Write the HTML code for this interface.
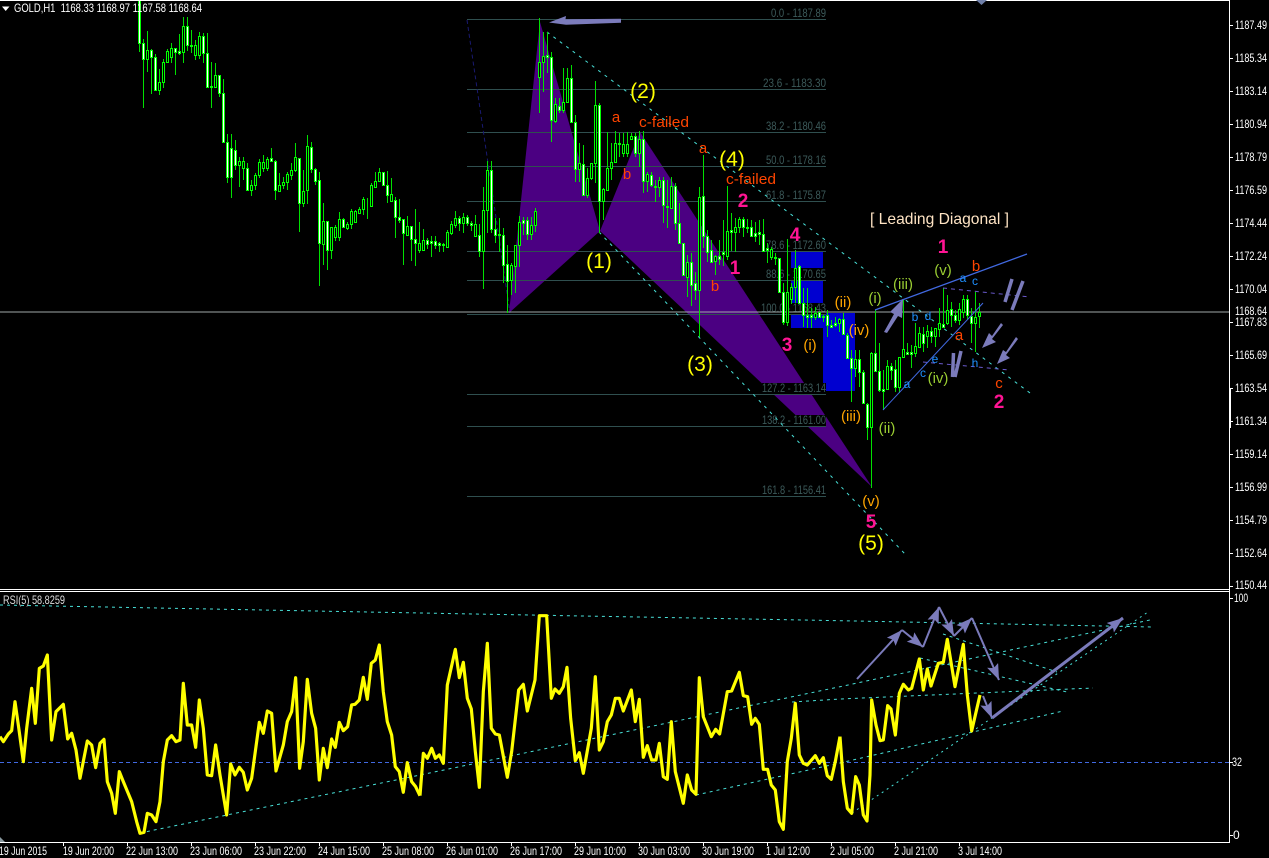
<!DOCTYPE html>
<html><head><meta charset="utf-8"><title>GOLD,H1</title>
<style>
html,body{margin:0;padding:0;background:#000;width:1269px;height:858px;overflow:hidden}
svg{display:block}
text{font-family:"Liberation Sans",sans-serif}
.p text{font-size:12px;fill:#fff}
.f text{font-size:12px;fill:#3c5a5a}
.t text{font-size:12px;fill:#fff}
.m{fill:#ff1493;font-size:19px;text-anchor:middle;font-weight:bold}
.y{fill:#ff0;font-size:21px;text-anchor:middle}
.r{fill:#ff4500;font-size:15px;text-anchor:middle}
.o{fill:#ffa500;font-size:15px;text-anchor:middle}
.g{fill:#9acd32;font-size:15px;text-anchor:middle}
.b{fill:#1e90ff;font-size:12px;text-anchor:middle}
</style></head><body>
<svg width="1269" height="858" viewBox="0 0 1269 858" xmlns="http://www.w3.org/2000/svg">
<defs>
<marker id="ah" markerUnits="userSpaceOnUse" markerWidth="18" markerHeight="14" refX="16" refY="6" orient="auto"><path d="M0 0L16 6L0 12L3 6z" fill="#7b7bbb"/></marker>
</defs>
<rect width="1269" height="858" fill="#000"/>
<!-- harmonic pattern -->
<path d="M509 313L540 22L600 231z" fill="#4b0082"/>
<path d="M600 231L640 132L872 487z" fill="#4b0082"/>
<!-- blue rects -->
<rect x="791" y="251" width="32" height="77" fill="#0000d0"/>
<rect x="823" y="313" width="32" height="78" fill="#0000d0"/>
<!-- fib lines -->
<g stroke="#2f4f4f" stroke-width="1" shape-rendering="crispEdges">
<path d="M467 19.5H826M467 89.5H826M467 132.5H826M467 166.5H826M467 201.5H826M467 251.5H826M467 280.5H826M467 314.5H826M467 394.5H826M467 426.5H826M467 496.5H826" fill="none"/>
</g>
<!-- fib label backgrounds -->
<g fill="#000">
<rect x="771" y="8" width="55" height="11"/><rect x="763" y="78" width="63" height="11"/><rect x="766" y="121" width="60" height="11"/><rect x="766" y="155" width="60" height="11"/><rect x="766" y="190" width="60" height="11"/><rect x="766" y="240" width="60" height="11"/><rect x="766" y="268" width="60" height="12"/><rect x="761" y="303" width="65" height="11"/><rect x="762" y="383" width="64" height="11"/><rect x="762" y="415" width="64" height="11"/><rect x="762" y="485" width="64" height="11"/>
</g>
<g class="f">
<text x="771" y="17" textLength="55" lengthAdjust="spacingAndGlyphs">0.0 - 1187.89</text>
<text x="763" y="87" textLength="63" lengthAdjust="spacingAndGlyphs">23.6 - 1183.30</text>
<text x="766" y="130" textLength="60" lengthAdjust="spacingAndGlyphs">38.2 - 1180.46</text>
<text x="766" y="164" textLength="60" lengthAdjust="spacingAndGlyphs">50.0 - 1178.16</text>
<text x="766" y="199" textLength="60" lengthAdjust="spacingAndGlyphs">61.8 - 1175.87</text>
<text x="766" y="249" textLength="60" lengthAdjust="spacingAndGlyphs">78.6 - 1172.60</text>
<text x="766" y="278" textLength="60" lengthAdjust="spacingAndGlyphs">88.6 - 1170.65</text>
<text x="761" y="312" textLength="65" lengthAdjust="spacingAndGlyphs">100.0 - 1168.43</text>
<text x="762" y="392" textLength="64" lengthAdjust="spacingAndGlyphs">127.2 - 1163.14</text>
<text x="762" y="424" textLength="64" lengthAdjust="spacingAndGlyphs">138.2 - 1161.00</text>
<text x="762" y="494" textLength="64" lengthAdjust="spacingAndGlyphs">161.8 - 1156.41</text>
</g>
<!-- dashed channels -->
<path d="M467 20L510 313" stroke="#191970" stroke-width="1" stroke-dasharray="4 3" fill="none"/>
<path d="M547 32L1030 393M599 232L905 554" stroke="#48e0d8" stroke-width="1" stroke-dasharray="3 5" fill="none"/>
<!-- current price line -->
<path d="M0 312H1229" stroke="#a0a8a8" stroke-width="1" shape-rendering="crispEdges"/>
<!-- wicks -->
<path shape-rendering="crispEdges" stroke="#00e000" stroke-width="1" fill="none" d="M139.5 0V52M143.5 39V108M147.5 31V72M151.5 49V94M155.5 54V91M159.5 69V95M163.5 59V88M167.5 49V63M171.5 43V63M175.5 48V75M179.5 34V55M183.5 17V63M187.5 17V51M191.5 30V53M195.5 40V60M199.5 32V59M203.5 33V63M207.5 33V87M211.5 62V108M215.5 63V87M219.5 75V97M223.5 79V142M227.5 134V183M231.5 134V198M235.5 140V170M239.5 157V187M243.5 157V180M247.5 163V190M251.5 180V196M255.5 173V190M259.5 159V178M263.5 155V172M267.5 157V171M271.5 148V162M275.5 160V200M279.5 173V191M283.5 177V189M287.5 172V190M291.5 163V180M295.5 143V172M299.5 158V232M303.5 170V207M307.5 135V204M311.5 142V173M315.5 168V185M319.5 172V286M323.5 203V265M327.5 221V270M331.5 227V259M335.5 225V241M339.5 212V241M343.5 218V228M347.5 222V230M351.5 209V229M355.5 210V223M359.5 207V213M363.5 197V215M367.5 198V219M371.5 183V207M375.5 172V188M379.5 168V182M383.5 172V186M387.5 171V203M391.5 178V201M395.5 197V238M399.5 199V223M403.5 219V265M407.5 216V236M411.5 226V261M415.5 209V266M419.5 222V253M423.5 229V249M427.5 238V249M431.5 236V257M435.5 236V249M439.5 242V252M443.5 243V252M447.5 230V247M451.5 221V235M455.5 211V228M459.5 216V231M463.5 213V233M467.5 215V226M471.5 221V231M475.5 215V236M479.5 224V257M483.5 187V289M487.5 161V233M491.5 161V233M495.5 218V243M499.5 218V252M503.5 228V283M507.5 245V313M511.5 263V295M515.5 245V293M519.5 216V267M523.5 217V235M527.5 217V240M531.5 217V240M535.5 208V232M539.5 18V113M543.5 32V92M547.5 32V73M551.5 52V142M555.5 98V123M559.5 98V113M563.5 68V113M567.5 68V103M571.5 65V122M575.5 115V182M579.5 143V182M583.5 145V195M587.5 168V198M591.5 163V180M595.5 81V183M599.5 103V233M603.5 188V220M607.5 132V190M611.5 143V180M615.5 131V163M619.5 133V157M623.5 133V157M627.5 132V157M631.5 133V140M635.5 133V157M639.5 131V167M643.5 131V193M647.5 172V192M651.5 172V187M655.5 180V202M659.5 177V197M663.5 177V223M667.5 180V228M671.5 177V209M675.5 183V230M679.5 203V244M683.5 243V275M687.5 255V297M691.5 253V306M695.5 272V300M699.5 187V337M703.5 155V248M707.5 230V262M711.5 240V262M715.5 255V275M719.5 240V265M723.5 220V266M727.5 186V260M731.5 213V251M735.5 218V252M739.5 217V233M743.5 217V237M747.5 219V233M751.5 220V237M755.5 222V242M759.5 220V245M763.5 219V252M767.5 243V263M771.5 247V260M775.5 253V265M779.5 258V293M783.5 283V325M787.5 239V326M791.5 283V304M795.5 250V303M799.5 265V303M803.5 288V327M807.5 288V328M811.5 308V328M815.5 307V320M819.5 312V318M823.5 315V322M827.5 310V337M831.5 320V328M835.5 317V327M839.5 318V332M843.5 313V333M847.5 333V358M851.5 350V402M855.5 350V377M859.5 350V387M863.5 370V403M867.5 403V440M871.5 352V488M875.5 310V370M879.5 343V392M883.5 370V410M887.5 360V390M891.5 363V380M895.5 360V392M899.5 357V393M903.5 299V357M907.5 343V355M911.5 345V368M915.5 323V357M919.5 327V348M923.5 327V352M927.5 325V348M931.5 327V343M935.5 328V347M939.5 308V337M943.5 288V328M947.5 295V325M951.5 302V327M955.5 310V323M959.5 303V325M963.5 295V318M967.5 295V320M971.5 308V343M975.5 292V352M979.5 303V328"/>
<!-- bodies white -->
<path shape-rendering="crispEdges" fill="#fff" stroke="#00ff00" stroke-width="1" d="M138.5 .5h2v43h-2zM142.5 43.5h2v16h-2zM150.5 50.5h2v7h-2zM154.5 57.5h2v33h-2zM174.5 48.5h2v4h-2zM178.5 51.5h2v2h-2zM186.5 26.5h2v19h-2zM190.5 45.5h2v1h-2zM202.5 36.5h2v17h-2zM206.5 53.5h2v34h-2zM210.5 86.5h2v1h-2zM218.5 75.5h2v18h-2zM222.5 93.5h2v49h-2zM226.5 142.5h2v35h-2zM230.5 148.5h2v29h-2zM234.5 150.5h2v15h-2zM246.5 168.5h2v22h-2zM270.5 158.5h2v3h-2zM274.5 161.5h2v29h-2zM298.5 158.5h2v45h-2zM310.5 147.5h2v22h-2zM314.5 169.5h2v12h-2zM318.5 180.5h2v63h-2zM326.5 221.5h2v29h-2zM342.5 219.5h2v8h-2zM382.5 172.5h2v13h-2zM386.5 185.5h2v10h-2zM394.5 200.5h2v17h-2zM398.5 217.5h2v3h-2zM402.5 219.5h2v14h-2zM410.5 226.5h2v13h-2zM414.5 239.5h2v4h-2zM426.5 240.5h2v4h-2zM430.5 241.5h2v2h-2zM434.5 241.5h2v4h-2zM438.5 243.5h2v2h-2zM442.5 244.5h2v1h-2zM458.5 218.5h2v5h-2zM466.5 217.5h2v6h-2zM470.5 223.5h2v2h-2zM478.5 235.5h2v16h-2zM490.5 170.5h2v59h-2zM494.5 229.5h2v6h-2zM498.5 234.5h2v1h-2zM502.5 235.5h2v30h-2zM506.5 264.5h2v17h-2zM522.5 220.5h2v3h-2zM526.5 220.5h2v14h-2zM546.5 55.5h2v2h-2zM550.5 57.5h2v63h-2zM558.5 106.5h2v4h-2zM570.5 78.5h2v44h-2zM574.5 122.5h2v47h-2zM582.5 164.5h2v31h-2zM598.5 105.5h2v96h-2zM618.5 143.5h2v1h-2zM634.5 136.5h2v17h-2zM642.5 139.5h2v42h-2zM650.5 175.5h2v10h-2zM654.5 186.5h2v1h-2zM662.5 180.5h2v25h-2zM666.5 206.5h2v1h-2zM674.5 186.5h2v37h-2zM678.5 223.5h2v20h-2zM682.5 243.5h2v32h-2zM690.5 262.5h2v23h-2zM694.5 283.5h2v7h-2zM702.5 196.5h2v40h-2zM706.5 236.5h2v16h-2zM710.5 250.5h2v12h-2zM718.5 256.5h2v3h-2zM722.5 252.5h2v2h-2zM730.5 230.5h2v2h-2zM742.5 219.5h2v8h-2zM746.5 227.5h2v1h-2zM750.5 227.5h2v9h-2zM754.5 233.5h2v3h-2zM758.5 232.5h2v2h-2zM762.5 234.5h2v17h-2zM766.5 248.5h2v2h-2zM774.5 257.5h2v1h-2zM778.5 258.5h2v34h-2zM782.5 292.5h2v30h-2zM798.5 266.5h2v37h-2zM802.5 303.5h2v12h-2zM806.5 315.5h2v2h-2zM810.5 315.5h2v2h-2zM818.5 312.5h2v5h-2zM822.5 316.5h2v1h-2zM826.5 315.5h2v10h-2zM830.5 325.5h2v2h-2zM834.5 323.5h2v2h-2zM842.5 319.5h2v15h-2zM846.5 335.5h2v23h-2zM850.5 358.5h2v10h-2zM858.5 359.5h2v13h-2zM862.5 372.5h2v31h-2zM866.5 404.5h2v23h-2zM874.5 353.5h2v18h-2zM878.5 371.5h2v19h-2zM882.5 389.5h2v2h-2zM890.5 366.5h2v4h-2zM894.5 369.5h2v18h-2zM906.5 352.5h2v2h-2zM910.5 352.5h2v2h-2zM922.5 334.5h2v9h-2zM930.5 331.5h2v5h-2zM942.5 324.5h2v3h-2zM950.5 309.5h2v6h-2zM954.5 315.5h2v5h-2zM966.5 299.5h2v16h-2zM970.5 316.5h2v7h-2z"/>
<!-- bodies black -->
<path shape-rendering="crispEdges" fill="#000" stroke="#00ff00" stroke-width="1" d="M146.5 50.5h2v9h-2zM158.5 82.5h2v8h-2zM162.5 62.5h2v20h-2zM166.5 51.5h2v11h-2zM170.5 48.5h2v9h-2zM182.5 26.5h2v26h-2zM194.5 45.5h2v10h-2zM198.5 36.5h2v19h-2zM214.5 75.5h2v12h-2zM238.5 161.5h2v4h-2zM242.5 161.5h2v7h-2zM250.5 185.5h2v5h-2zM254.5 175.5h2v10h-2zM258.5 162.5h2v13h-2zM262.5 162.5h2v6h-2zM266.5 159.5h2v9h-2zM278.5 185.5h2v6h-2zM282.5 182.5h2v3h-2zM286.5 174.5h2v8h-2zM290.5 170.5h2v5h-2zM294.5 157.5h2v13h-2zM302.5 191.5h2v12h-2zM306.5 146.5h2v44h-2zM322.5 221.5h2v23h-2zM330.5 227.5h2v23h-2zM334.5 227.5h2v10h-2zM338.5 219.5h2v18h-2zM346.5 224.5h2v4h-2zM350.5 211.5h2v13h-2zM354.5 211.5h2v11h-2zM358.5 209.5h2v4h-2zM362.5 199.5h2v10h-2zM370.5 185.5h2v21h-2zM374.5 181.5h2v6h-2zM378.5 172.5h2v9h-2zM390.5 194.5h2v7h-2zM406.5 226.5h2v9h-2zM418.5 243.5h2v7h-2zM422.5 240.5h2v10h-2zM446.5 232.5h2v15h-2zM450.5 224.5h2v9h-2zM454.5 218.5h2v7h-2zM462.5 217.5h2v6h-2zM474.5 224.5h2v12h-2zM482.5 210.5h2v41h-2zM486.5 170.5h2v40h-2zM510.5 265.5h2v15h-2zM514.5 245.5h2v21h-2zM518.5 222.5h2v23h-2zM530.5 225.5h2v9h-2zM534.5 211.5h2v14h-2zM538.5 62.5h2v15h-2zM542.5 56.5h2v6h-2zM554.5 104.5h2v17h-2zM562.5 102.5h2v8h-2zM566.5 78.5h2v24h-2zM578.5 163.5h2v6h-2zM586.5 178.5h2v17h-2zM590.5 163.5h2v15h-2zM594.5 105.5h2v58h-2zM602.5 189.5h2v12h-2zM606.5 168.5h2v22h-2zM610.5 162.5h2v6h-2zM614.5 143.5h2v19h-2zM622.5 144.5h2v9h-2zM626.5 144.5h2v9h-2zM630.5 136.5h2v3h-2zM638.5 139.5h2v14h-2zM646.5 174.5h2v7h-2zM658.5 180.5h2v7h-2zM670.5 186.5h2v22h-2zM686.5 262.5h2v15h-2zM698.5 197.5h2v93h-2zM714.5 256.5h2v5h-2zM726.5 231.5h2v25h-2zM734.5 227.5h2v5h-2zM738.5 219.5h2v8h-2zM770.5 249.5h2v8h-2zM786.5 292.5h2v30h-2zM790.5 287.5h2v12h-2zM794.5 268.5h2v19h-2zM814.5 313.5h2v4h-2zM838.5 319.5h2v4h-2zM854.5 359.5h2v9h-2zM870.5 353.5h2v74h-2zM886.5 366.5h2v23h-2zM898.5 357.5h2v30h-2zM902.5 349.5h2v8h-2zM914.5 346.5h2v7h-2zM918.5 333.5h2v14h-2zM926.5 331.5h2v5h-2zM934.5 328.5h2v8h-2zM938.5 323.5h2v6h-2zM946.5 310.5h2v13h-2zM958.5 309.5h2v11h-2zM962.5 299.5h2v13h-2zM974.5 317.5h2v6h-2zM978.5 312.5h2v4h-2z"/>
<!-- diagonal lines -->
<path d="M875 310L1027 254" stroke="#4169e1" stroke-width="1.3" fill="none"/>
<path d="M883 410L983 303" stroke="#4169e1" stroke-width="1" fill="none"/>
<path d="M943 288L1030 297M923 362L1010 370" stroke="#6a5acd" stroke-width="1" stroke-dasharray="4 4" fill="none"/>
<!-- thick arrows -->
<g fill="#7b7bbb">
<path d="M549 22.5L566 16L565.5 19.3L621 18.7V22.7L566 24.7z"/>
<path d="M884 332L894 314L890 312L903 299L902 318L898 316L887 333z"/>
<path d="M1003 325L992 339L996 342L982 348L989 333L992 336L1001 323z"/>
<path d="M1018 339L1006 355L1010 358L997 364L1003 350L1006 352L1016 337z"/>
</g>
<path d="M1012 279L1005 302M1023 281L1012 310M953.5 353L952.5 377M961 351L955 377" stroke="#7b7bbb" stroke-width="3.5" fill="none"/>
<!-- annotations -->
<text class="y" x="643" y="98">(2)</text>
<text class="y" x="732" y="166">(4)</text>
<text class="y" x="599" y="268">(1)</text>
<text class="y" x="700" y="371">(3)</text>
<text class="y" x="871" y="550">(5)</text>
<text class="r" x="616" y="122">a</text>
<text class="r" x="664" y="127" textLength="50" lengthAdjust="spacingAndGlyphs" style="text-anchor:start" dx="-25">c-failed</text>
<text class="r" x="703" y="153">a</text>
<text class="r" x="627" y="179">b</text>
<text class="r" x="751" y="184" textLength="50" lengthAdjust="spacingAndGlyphs" style="text-anchor:start" dx="-25">c-failed</text>
<text class="r" x="715" y="291">b</text>
<text class="r" x="976" y="271">b</text>
<text class="r" x="959" y="340">a</text>
<text class="r" x="999" y="388">c</text>
<text class="m" x="743" y="207">2</text>
<text class="m" x="735" y="274">1</text>
<text class="m" x="795" y="241">4</text>
<text class="m" x="787" y="351">3</text>
<text class="m" x="871" y="528">5</text>
<text class="m" x="943" y="253">1</text>
<text class="m" x="999" y="408">2</text>
<text class="o" x="843" y="307">(ii)</text>
<text class="o" x="859" y="335">(iv)</text>
<text class="o" x="810" y="350">(i)</text>
<text class="o" x="851" y="421">(iii)</text>
<text class="o" x="871" y="506">(v)</text>
<text class="g" x="875" y="303">(i)</text>
<text class="g" x="903" y="289">(iii)</text>
<text class="g" x="943" y="275">(v)</text>
<text class="g" x="938" y="383">(iv)</text>
<text class="g" x="887" y="433">(ii)</text>
<text class="b" x="963" y="282">a</text>
<text class="b" x="975" y="285">c</text>
<text class="b" x="915" y="321">b</text>
<text class="b" x="928" y="320">d</text>
<text class="b" x="935" y="363">e</text>
<text class="b" x="975" y="367">h</text>
<text class="b" x="923" y="377">c</text>
<text class="b" x="907" y="388">a</text>
<text x="870" y="224" textLength="139" lengthAdjust="spacingAndGlyphs" font-size="16" fill="#ffe4c4">[ Leading Diagonal ]</text>
<!-- header -->
<path d="M2 6.5H9.5L5.7 11z" fill="#fff"/>
<text x="14" y="12" font-size="12" fill="#fff" textLength="188" lengthAdjust="spacingAndGlyphs" xml:space="preserve">GOLD,H1  1168.33 1168.97 1167.58 1168.64</text>
<!-- frame -->
<g stroke="#fff" stroke-width="1" shape-rendering="crispEdges" fill="none">
<path d="M0 .5H1229.5V842.5H0M0 589.5H1229M0 591.5H1229"/>
<path d="M1230 25.5h3M1230 58.5h3M1230 91.5h3M1230 124.5h3M1230 157.5h3M1230 190.5h3M1230 223.5h3M1230 256.5h3M1230 289.5h3M1230 322.5h3M1230 355.5h3M1230 388.5h3M1230 421.5h3M1230 454.5h3M1230 487.5h3M1230 520.5h3M1230 553.5h3M1230 586.5h3M1230 598.5h3M1230 762.5h3M1230 835.5h3"/>
<path d="M63.5 843v3M127.5 843v3M191.5 843v3M255.5 843v3M319.5 843v3M383.5 843v3M447.5 843v3M511.5 843v3M575.5 843v3M639.5 843v3M703.5 843v3M767.5 843v3M831.5 843v3M895.5 843v3M959.5 843v3"/>
<path d="M1230.5 388V428" stroke-width="1"/>
</g>
<path d="M976 0H987L981.5 5z" fill="#6f7fa8"/>
<path d="M0 837L5 842H0z" fill="#8a9aa0"/>
<g class="p">
<text x="1235" y="29" textLength="32" lengthAdjust="spacingAndGlyphs">1187.49</text>
<text x="1235" y="62" textLength="32" lengthAdjust="spacingAndGlyphs">1185.34</text>
<text x="1235" y="95" textLength="32" lengthAdjust="spacingAndGlyphs">1183.14</text>
<text x="1235" y="128" textLength="32" lengthAdjust="spacingAndGlyphs">1180.94</text>
<text x="1235" y="161" textLength="32" lengthAdjust="spacingAndGlyphs">1178.79</text>
<text x="1235" y="194" textLength="32" lengthAdjust="spacingAndGlyphs">1176.59</text>
<text x="1235" y="227" textLength="32" lengthAdjust="spacingAndGlyphs">1174.44</text>
<text x="1235" y="260" textLength="32" lengthAdjust="spacingAndGlyphs">1172.24</text>
<text x="1235" y="293" textLength="32" lengthAdjust="spacingAndGlyphs">1170.04</text>
<text x="1235" y="315" textLength="32" lengthAdjust="spacingAndGlyphs">1168.64</text>
<text x="1235" y="326" textLength="32" lengthAdjust="spacingAndGlyphs">1167.83</text>
<text x="1235" y="359" textLength="32" lengthAdjust="spacingAndGlyphs">1165.69</text>
<text x="1235" y="392" textLength="32" lengthAdjust="spacingAndGlyphs">1163.54</text>
<text x="1235" y="425" textLength="32" lengthAdjust="spacingAndGlyphs">1161.34</text>
<text x="1235" y="458" textLength="32" lengthAdjust="spacingAndGlyphs">1159.14</text>
<text x="1235" y="491" textLength="32" lengthAdjust="spacingAndGlyphs">1156.99</text>
<text x="1235" y="524" textLength="32" lengthAdjust="spacingAndGlyphs">1154.79</text>
<text x="1235" y="557" textLength="32" lengthAdjust="spacingAndGlyphs">1152.64</text>
<text x="1235" y="589" textLength="32" lengthAdjust="spacingAndGlyphs">1150.44</text>
<text x="1234" y="602" textLength="14" lengthAdjust="spacingAndGlyphs">100</text>
<text x="1232" y="766" textLength="10" lengthAdjust="spacingAndGlyphs">32</text>
<text x="1233" y="839">0</text>
</g>
<!-- RSI -->
<text x="3" y="604" font-size="12" fill="#ddd" textLength="62" lengthAdjust="spacingAndGlyphs">RSI(5) 58.8259</text>
<path d="M0 762.5H1229" stroke="#4169e1" stroke-width="1" stroke-dasharray="4 3" shape-rendering="crispEdges"/>
<path d="M0 605L420 613L840 620.7L1153 627M140 833L420 775L840 686.7L1150 620M696 795L840 763L1063 711M792 702L840 699L1093 688M920 658L1067 692M943 634L1057 672" stroke="#48e0d8" stroke-width="1" stroke-dasharray="3 4" fill="none"/>
<path d="M852 813L1148 612" stroke="#48e0d8" stroke-width="1" stroke-dasharray="2 4" fill="none"/>
<g fill="none" stroke="#ffff00" stroke-linejoin="round">
<polyline transform="translate(0,585) scale(.3333)" stroke-width="9.5" points="0,455 10,470 25,447 35,437 45,350 55,420 70,530 80,430 95,310 106,415 118,250 130,243 142,210 155,465 168,380 190,358 203,462 215,445 228,495 240,580 262,468 275,480 287,548 300,475 312,463 322,590 335,625 346,685 358,560 370,590 395,650 410,710 420,745 432,742 442,685 455,690 468,710 480,650 490,530 502,465 515,452 528,470 540,465 550,295 562,420 575,420 587,487 598,345 610,430 622,570 635,572 647,480 660,570 680,690 692,537 705,570 718,547 730,562 742,615 755,580 778,412 790,445 802,378 815,385 828,558 850,480 862,410 875,380 887,278 899,550 910,470 922,283 935,385 947,430 958,585 970,490 982,548 995,462 1006,487 1018,412 1030,437 1043,425 1055,360 1065,358 1078,345 1090,277 1102,343 1114,235 1126,225 1138,180 1150,320 1162,410 1175,450 1186,545 1198,560 1210,622 1222,533 1235,590 1247,605 1260,632"/>
<polyline transform="translate(420,585) scale(.3333)" stroke-width="9.5" points="0,632 10,505 22,520 35,490 46,520 58,510 70,535 82,300 106,193 118,278 130,232 142,340 154,372 166,500 178,607 190,320 202,175 214,430 226,447 238,450 262,577 275,500 296,315 310,298 322,378 345,285 358,92 380,92 394,340 405,312 418,325 430,305 441,247 452,400 466,527 478,503 490,565 514,430 526,275 538,495 550,470 562,410 574,390 586,340 598,340 610,378 634,315 646,410 658,343 670,517 682,482 695,525 708,525 718,475 730,575 742,583 754,410 766,560 790,655 802,570 815,615 828,628 838,278 850,395 874,455 887,433 899,447 922,320 935,318 958,262 970,332 983,335 995,418 1006,400 1018,418 1030,553 1043,553 1054,600 1066,615 1078,710 1090,733 1102,530 1114,460 1126,355 1138,510 1150,535 1162,540 1186,512 1198,535 1210,518 1222,572 1234,583 1246,530 1260,455"/>
<polyline transform="translate(840,585) scale(.3333)" stroke-width="9.5" points="0,455 10,590 22,670 35,685 47,575 58,600 70,690 81,708 90,570 95,345 108,420 120,467 130,465 143,362 153,372 166,450 178,325 190,298 205,315 215,310 238,222 250,315 262,252 273,303 295,235 310,232 322,163 345,305 370,178 382,330 395,438 420,330"/>
</g>
<!-- RSI arrows -->
<g stroke="#7b7bbb" stroke-width="2" fill="none">
<path d="M857 679L902 630" marker-end="url(#ah)"/>
<path d="M902 630L923 647" marker-end="url(#ah)"/>
<path d="M923 647L939 607" marker-end="url(#ah)"/>
<path d="M939 607L954 636" marker-end="url(#ah)"/>
<path d="M954 636L972 618" marker-end="url(#ah)"/>
<path d="M972 618L999 680" marker-end="url(#ah)"/>
<path d="M983 696L992 718" marker-end="url(#ah)"/>
<path d="M992 718L1123 618" stroke-width="3" marker-end="url(#ah)"/>
</g>
<!-- time labels -->
<g class="t">
<text x="-1" y="855" textLength="48" lengthAdjust="spacingAndGlyphs">19 Jun 2015</text>
<text x="63" y="855" textLength="51" lengthAdjust="spacingAndGlyphs">19 Jun 20:00</text>
<text x="126" y="855" textLength="52" lengthAdjust="spacingAndGlyphs">22 Jun 13:00</text>
<text x="190" y="855" textLength="52" lengthAdjust="spacingAndGlyphs">23 Jun 06:00</text>
<text x="254" y="855" textLength="52" lengthAdjust="spacingAndGlyphs">23 Jun 22:00</text>
<text x="318" y="855" textLength="52" lengthAdjust="spacingAndGlyphs">24 Jun 15:00</text>
<text x="382" y="855" textLength="52" lengthAdjust="spacingAndGlyphs">25 Jun 08:00</text>
<text x="446" y="855" textLength="52" lengthAdjust="spacingAndGlyphs">26 Jun 01:00</text>
<text x="510" y="855" textLength="52" lengthAdjust="spacingAndGlyphs">26 Jun 17:00</text>
<text x="574" y="855" textLength="52" lengthAdjust="spacingAndGlyphs">29 Jun 10:00</text>
<text x="638" y="855" textLength="52" lengthAdjust="spacingAndGlyphs">30 Jun 03:00</text>
<text x="702" y="855" textLength="52" lengthAdjust="spacingAndGlyphs">30 Jun 19:00</text>
<text x="766" y="855" textLength="44" lengthAdjust="spacingAndGlyphs">1 Jul 12:00</text>
<text x="830" y="855" textLength="44" lengthAdjust="spacingAndGlyphs">2 Jul 05:00</text>
<text x="894" y="855" textLength="44" lengthAdjust="spacingAndGlyphs">2 Jul 21:00</text>
<text x="958" y="855" textLength="44" lengthAdjust="spacingAndGlyphs">3 Jul 14:00</text>
</g>
</svg>
</body></html>
